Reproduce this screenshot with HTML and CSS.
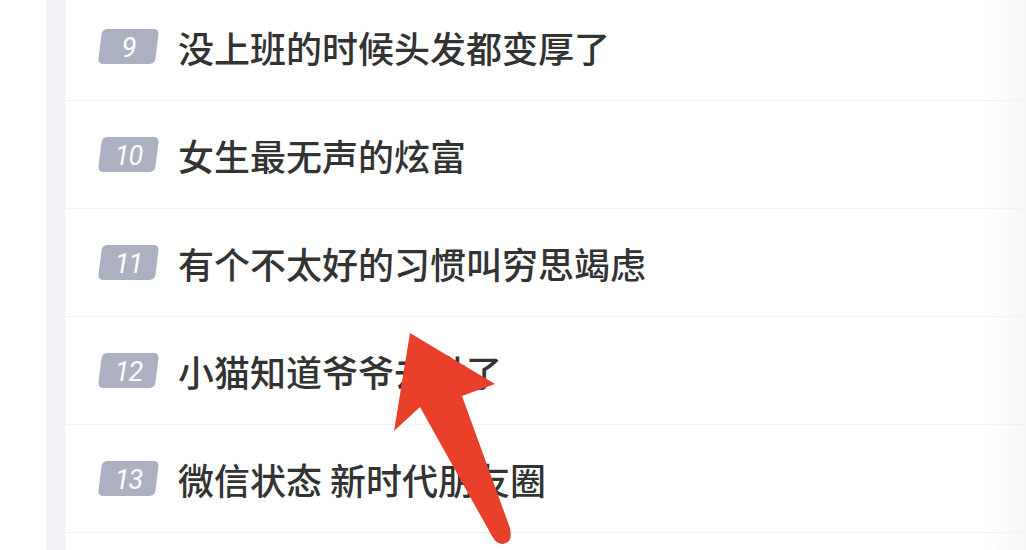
FILE: index.html
```html
<!DOCTYPE html>
<html lang="zh-CN">
<head>
  <meta charset="UTF-8">
  <meta name="viewport" content="width=device-width, initial-scale=1.0">
  <title>热搜榜</title>
  <link rel="stylesheet" href="styles.css">
</head>
<body>
  <div class="page">
    <div class="side"></div>
    <div class="rail"></div>
    <ul class="list">
      <li class="row">
        <span class="badge"><span class="num">9</span></span>
        <span class="title">没上班的时候头发都变厚了</span>
      </li>
      <li class="row">
        <span class="badge"><span class="num">10</span></span>
        <span class="title">女生最无声的炫富</span>
      </li>
      <li class="row">
        <span class="badge"><span class="num">11</span></span>
        <span class="title">有个不太好的习惯叫穷思竭虑</span>
      </li>
      <li class="row">
        <span class="badge"><span class="num">12</span></span>
        <span class="title">小猫知道爷爷去世了</span>
      </li>
      <li class="row">
        <span class="badge"><span class="num">13</span></span>
        <span class="title">微信状态 新时代朋友圈</span>
      </li>
    </ul>
  </div>

  <!-- annotation arrow -->
  <svg class="arrow" width="1026" height="550" viewBox="0 0 1026 550">
    <path d="M410 333 L495 384 L462 396 L510 528 Q513 543 503 544 Q496 544 492 536 L420 407 L394 431 Z" fill="#e8402a"/>
  </svg>
</body>
</html>
```

FILE: styles.css
```css
body {
  margin: 0;
  background-color: #ffffff;
  font-family: 'Noto Sans CJK SC', 'Noto Sans', sans-serif;
  overflow: hidden;
}
.page {
  display: flex;
  height: 550px;
}
.side {
  width: 47px;
  background-color: #ffffff;
}
.rail {
  width: 18px;
  background-color: #f0f1f6;
}
.list {
  flex: 1;
  list-style: none;
  margin: -7px 0 0 0;
  padding: 0;
  background: linear-gradient(to right, #ffffff 96%, #f7f7f8);
}
.row {
  display: flex;
  align-items: center;
  height: 107px;
  padding-left: 35px;
  border-bottom: 1px solid #f1f1f3;
}
.badge {
  width: 57px;
  height: 35px;
  border-radius: 5px;
  background-color: #acb1c1;
  transform: skewX(-7deg);
  display: flex;
  align-items: center;
  justify-content: center;
  flex-shrink: 0;
}
.num {
  transform: skewX(7deg);
  margin-top: 3px;
  font-family: Roboto, 'Liberation Sans', sans-serif;
  font-style: italic;
  font-size: 27px;
  line-height: 1;
  color: #ffffff;
  letter-spacing: -1px;
}
.title {
  margin-left: 21px;
  font-size: 36px;
  font-weight: 500;
  color: #333333;
  white-space: nowrap;
}
.arrow {
  position: absolute;
  top: 0;
  left: 0;
}
```
